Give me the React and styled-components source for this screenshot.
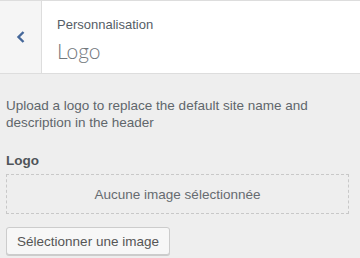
import React from "react";
import styled, { createGlobalStyle } from "styled-components";

const GlobalStyle = createGlobalStyle`
  html, body {
    margin: 0;
    padding: 0;
    background: #eeeeee;
    font-family: "Liberation Sans", Arial, sans-serif;
  }
`;

const Panel = styled.div`
  width: 360px;
  height: 258px;
  overflow: hidden;
  background: #eeeeee;
`;

const Header = styled.div`
  display: flex;
  height: 72px;
  background: #fff;
  border-top: 1px solid #dddddd;
  border-bottom: 1px solid #dddddd;
`;

const BackButton = styled.div`
  width: 41px;
  flex: none;
  display: flex;
  align-items: center;
  justify-content: center;
  background: #f5f5f5;
  border-right: 1px solid #dddddd;
  color: #46689a;
`;

const Titles = styled.div`
  padding: 16px 0 0 15px;
  color: #555d66;
`;

const Crumb = styled.div`
  font-size: 13px;
  line-height: 16px;
`;

const Title = styled.div`
  margin-top: 6px;
  font-family: Lato, "Liberation Sans", sans-serif;
  font-size: 21px;
  font-weight: 300;
  line-height: 24px;
  color: #72777c;
`;

const Body = styled.div`
  padding: 23px 11px 0 6px;
  display: flex;
  flex-direction: column;
`;

const Description = styled.p`
  margin: 0;
  font-size: 13.5px;
  line-height: 17px;
  color: #60666b;
`;

const Label = styled.div`
  margin-top: 22px;
  font-size: 13.5px;
  font-weight: bold;
  color: #4f5459;
  line-height: 16px;
`;

const Placeholder = styled.div`
  margin-top: 5px;
  height: 38px;
  border: 1px dashed #c8c8c8;
  display: flex;
  align-items: center;
  justify-content: center;
  font-size: 13.5px;
  color: #666b70;
`;

const Button = styled.button`
  align-self: flex-start;
  margin-top: 13px;
  height: 28px;
  padding: 0 10px;
  width: 164px;
  background: #f7f7f7;
  border: 1px solid #cccccc;
  border-radius: 3px;
  box-shadow: 0 1px 0 #cccccc;
  font-family: "Liberation Sans", Arial, sans-serif;
  font-size: 13.5px;
  color: #555555;
`;

export default function App() {
  return (
    <Panel>
      <GlobalStyle />
      <Header>
        <BackButton>
          <svg width="10" height="12" viewBox="0 0 10 12">
            <path d="M7.5 1 L2.5 6 L7.5 11" fill="none" stroke="currentColor" strokeWidth="2.4" />
          </svg>
        </BackButton>
        <Titles>
          <Crumb>Personnalisation</Crumb>
          <Title>Logo</Title>
        </Titles>
      </Header>
      <Body>
        <Description>
          Upload a logo to replace the default site name and description in the header
        </Description>
        <Label>Logo</Label>
        <Placeholder>Aucune image sélectionnée</Placeholder>
        <Button>Sélectionner une image</Button>
      </Body>
    </Panel>
  );
}
